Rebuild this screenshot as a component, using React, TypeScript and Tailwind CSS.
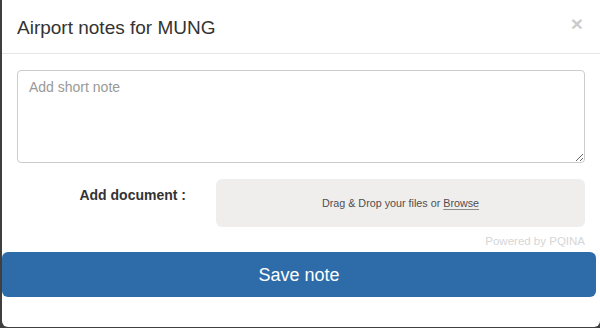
import React from 'react';

const font = { fontFamily: '"Liberation Sans", Arial, sans-serif' };

export default function App() {
  return (
    <div className="w-[600px] h-[328px] overflow-hidden bg-[#3f3f3f] pl-[2px]" style={font}>
      <div className="h-[327px] bg-white rounded-b-[6px] flex flex-col">
        {/* Header */}
        <div className="h-[54px] shrink-0 flex items-center justify-between pl-[15px] pr-[17px] border-b border-[#e5e5e5]">
          <h4 className="text-[19px] leading-[24px] text-[#333] pt-[2px]">Airport notes for MUNG</h4>
          <button className="text-[21px] leading-none font-bold text-black opacity-20 -mt-[6px]">×</button>
        </div>

        {/* Body */}
        <div className="pl-[15px] pr-[15px] pt-[16px]">
          <textarea
            placeholder="Add short note"
            className="block w-full h-[93px] border border-[#ccc] rounded-[4px] px-[11px] py-[6px] text-[14px] leading-[20px] text-[#555] placeholder:text-[#999] outline-none"
          />

          <div className="flex items-start gap-[30px] mt-[16px]">
            <label className="w-[169px] shrink-0 text-right text-[14px] leading-[20px] font-bold text-[#333] pt-[6px]">
              Add document :
            </label>
            <div className="flex-1 h-[48px] rounded-[6px] bg-[#efeeed] flex items-center justify-center">
              <span className="text-[10.75px] text-[#4f4f4f]">
                Drag &amp; Drop your files or{' '}
                <span className="underline decoration-[#8a8a8a] underline-offset-2">Browse</span>
              </span>
            </div>
          </div>

          <div className="text-right text-[11.5px] leading-[14px] text-[#d6d6d6] mt-[7px]">Powered by PQINA</div>
        </div>

        {/* Footer */}
        <div className="pt-[4px]">
          <button className="w-[594px] h-[45px] rounded-[6px] bg-[#2d6ca9] text-white text-[18px] leading-none">
            Save note
          </button>
        </div>
      </div>
    </div>
  );
}
